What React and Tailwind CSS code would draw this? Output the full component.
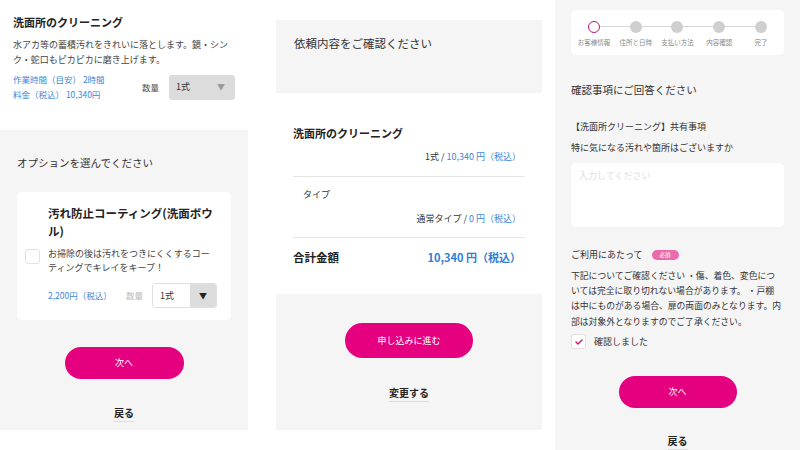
import React from 'react'

const blue = 'text-[#3d86d9]'

function PinkButton({ label, w = 'w-[119px]', h = 'h-[32px]' }) {
  return (
    <button
      type="button"
      className={`${w} ${h} mx-auto flex items-center justify-center rounded-full bg-[#e4007f] text-[9px] text-white`}
    >
      {label}
    </button>
  )
}

function TextLink({ label }) {
  return (
    <div className="flex justify-center">
      <span className="border-b border-[#ddd] pb-[1px] text-[10px] font-bold leading-[14px] text-[#222]">{label}</span>
    </div>
  )
}

function ServicePanel() {
  return (
    <div className="flex w-[248px] shrink-0 flex-col">
      {/* 商品情報 */}
      <div className="h-[130px] bg-white px-[13px] pt-[13px]">
        <h2 className="text-[11px] font-bold leading-[18px] text-[#222]">洗面所のクリーニング</h2>
        <p className="mt-[6px] text-[9px] leading-[15px] text-[#444]">
          水アカ等の蓄積汚れをきれいに落とします。鏡・シンク・蛇口もピカピカに磨き上げます。
        </p>
        <div className="mt-[5px] flex items-center">
          <div className={`text-[8.5px] leading-[15px] ${blue}`}>
            <div>作業時間（目安） 2時間</div>
            <div>料金（税込） 10,340円</div>
          </div>
          <span className="ml-auto mr-[10px] text-[8.5px] text-[#555]">数量</span>
          <div className="flex h-[25px] w-[66px] items-center justify-between rounded-[3px] bg-[#dcdcdc] pl-[7px] pr-[10px]">
            <span className="text-[9px] text-[#333]">1式</span>
            <span className="text-[8px] text-[#999]">▼</span>
          </div>
        </div>
      </div>

      {/* オプション */}
      <div className="h-[300px] bg-[#f5f5f5] px-[17px] pt-[25px]">
        <p className="text-[10.5px] leading-[16px] text-[#333]">オプションを選んでください</p>
        <div className="mt-[21px] flex h-[128px] w-[214px] items-center rounded-[5px] bg-white pl-[8px] pr-[14px]">
          <div className="h-[15px] w-[15px] shrink-0 rounded-[3px] border border-[#e2e2e2] bg-white" />
          <div className="ml-[8px] flex-1">
            <h3 className="text-[11.5px] font-bold leading-[18px] text-[#222]">汚れ防止コーティング(洗面ボウル)</h3>
            <p className="mt-[7px] text-[9px] leading-[14px] text-[#444]">
              お掃除の後は汚れをつきにくくするコーティングでキレイをキープ！
            </p>
            <div className="mt-[8px] flex items-center">
              <span className={`text-[8.5px] ${blue}`}>2,200円（税込）</span>
              <span className="ml-auto mr-[9px] text-[8.5px] text-[#bbb]">数量</span>
              <div className="flex h-[25px] w-[65px] overflow-hidden rounded-[3px] border border-[#e0e0e0]">
                <div className="flex flex-1 items-center bg-white pl-[7px] text-[9px] text-[#333]">1式</div>
                <div className="flex w-[26px] items-center justify-center bg-[#dcdcdc] text-[8px] text-[#222]">▼</div>
              </div>
            </div>
          </div>
        </div>
        <div className="mt-[27px]">
          <PinkButton label="次へ" />
        </div>
        <div className="mt-[27px]">
          <TextLink label="戻る" />
        </div>
      </div>
    </div>
  )
}

function ConfirmPanel() {
  return (
    <div className="ml-[28px] flex w-[266px] shrink-0 flex-col pt-[20px]">
      <div className="h-[73px] bg-[#f5f5f5] px-[18px] pt-[15px]">
        <p className="text-[11.5px] leading-[16px] text-[#333]">依頼内容をご確認ください</p>
      </div>
      <div className="h-[201px] bg-white px-[17px] pt-[31px]">
        <h2 className="text-[11px] font-bold leading-[18px] text-[#222]">洗面所のクリーニング</h2>
        <p className="mt-[8px] pr-[4px] text-right text-[9px] leading-[14px] text-[#333]">
          1式 / <span className={blue}>10,340 円（税込）</span>
        </p>
        <div className="mt-[12px] h-px bg-[#e6e6e6]" />
        <p className="mt-[11px] pl-[10px] text-[9px] leading-[14px] text-[#333]">タイプ</p>
        <p className="mt-[10px] pr-[4px] text-right text-[9px] leading-[14px] text-[#333]">
          通常タイプ / <span className={blue}>0 円（税込）</span>
        </p>
        <div className="mt-[11px] h-px bg-[#e6e6e6]" />
        <div className="mt-[10px] flex items-center justify-between pr-[4px]">
          <span className="text-[11.5px] font-bold leading-[18px] text-[#222]">合計金額</span>
          <span className="text-[11px] font-bold leading-[18px] text-[#2f7ed6]">10,340 円（税込）</span>
        </div>
      </div>
      <div className="h-[136px] bg-[#f5f5f5] pt-[29px]">
        <PinkButton label="申し込みに進む" w="w-[128px]" h="h-[35px]" />
        <div className="mt-[28px]">
          <TextLink label="変更する" />
        </div>
      </div>
    </div>
  )
}

const steps = ['お客様情報', '住所と日時', '支払い方法', '内容確認', '完了']

function Stepper() {
  return (
    <div className="flex h-[48px] rounded-[5px] bg-white px-[2px] pt-[11px]">
      {steps.map((s, i) => (
        <div key={s} className="relative flex flex-1 flex-col items-center">
          {i > 0 && <div className="absolute right-1/2 top-[5px] h-px w-full bg-[#d6d6d6]" />}
          <div
            className={`relative z-10 h-[12px] w-[12px] rounded-full ${
              i === 0 ? 'border-[1.5px] border-[#c2166f] bg-white' : 'bg-[#cfcfcf]'
            }`}
          />
          <span className="mt-[5px] whitespace-nowrap text-[6.5px] leading-[9px] text-[#888]">{s}</span>
        </div>
      ))}
    </div>
  )
}

// 参照画像と同じ位置で改行させる
const noticeLines = [
  '下記についてご確認ください ・傷、着色、変色につ',
  'いては完全に取り切れない場合があります。 ・戸棚',
  'は中にものがある場合、扉の両面のみとなります。内',
  '部は対象外となりますのでご了承ください。',
]

function QuestionPanel() {
  return (
    <div className="ml-[13px] flex h-[450px] w-[245px] shrink-0 flex-col bg-[#f5f5f5] pl-[16px] pr-[16px] pt-[10px]">
      <Stepper />
      <p className="mt-[27px] text-[10.5px] leading-[16px] text-[#333]">確認事項にご回答ください</p>
      <p className="mt-[22px] text-[9px] leading-[14px] text-[#333]">【洗面所クリーニング】共有事項</p>
      <p className="mt-[7px] text-[9px] leading-[14px] text-[#333]">特に気になる汚れや箇所はございますか</p>
      <div className="mt-[8px] h-[69px] rounded-[5px] bg-white px-[8px] pt-[6px] text-[9px] leading-[14px] text-[#e0e0e0]">
        入力してください
      </div>
      <div className="mt-[21px] flex items-center">
        <span className="text-[9px] leading-[14px] text-[#333]">ご利用にあたって</span>
        <span className="ml-[9px] flex h-[10px] w-[27px] items-center justify-center rounded-full bg-[#ec6aac] text-[5.5px] text-white">
          必須
        </span>
      </div>
      <div className="mt-[6px] text-[8.8px] leading-[15.3px] text-[#333]">
        {noticeLines.map((l) => (
          <div key={l} className="whitespace-nowrap">{l}</div>
        ))}
      </div>
      <div className="mt-[5px] flex items-center">
        <div className="flex h-[15px] w-[15px] items-center justify-center rounded-[3px] border border-[#e2e2e2] bg-white">
          <svg width="8" height="6" viewBox="0 0 8 6" fill="none">
            <polyline points="1,3 3,5 7,1" stroke="#c2166f" strokeWidth="1.4" strokeLinecap="round" strokeLinejoin="round" />
          </svg>
        </div>
        <span className="ml-[8px] text-[9px] text-[#333]">確認しました</span>
      </div>
      <div className="mt-[27px]">
        <PinkButton label="次へ" w="w-[118px]" />
      </div>
      <div className="mt-[26px]">
        <TextLink label="戻る" />
      </div>
    </div>
  )
}

export default function App() {
  return (
    <div className="flex h-[450px] w-[800px] overflow-hidden bg-white font-['Noto_Sans_CJK_JP','Noto_Sans',sans-serif]">
      <ServicePanel />
      <ConfirmPanel />
      <QuestionPanel />
    </div>
  )
}
